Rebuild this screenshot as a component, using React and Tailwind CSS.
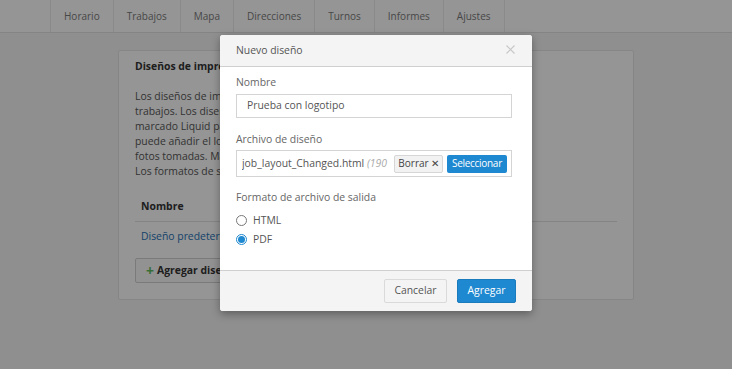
import React from 'react';

const NAV = ['Horario', 'Trabajos', 'Mapa', 'Direcciones', 'Turnos', 'Informes', 'Ajustes'];

function Radio({ label, checked }) {
  return (
    <div className="flex items-center h-[19px]">
      {checked ? (
        <span className="w-[11px] h-[11px] rounded-full border border-[#1e88d0] bg-white flex items-center justify-center">
          <span className="w-[7px] h-[7px] rounded-full bg-[#1e88d0]" />
        </span>
      ) : (
        <span className="w-[11px] h-[11px] rounded-full border border-[#777] bg-white" />
      )}
      <span className="ml-[6px] text-[10.4px] text-[#555]">{label}</span>
    </div>
  );
}

export default function App() {
  return (
    <div className="relative w-[732px] h-[369px] overflow-hidden bg-[#eeeeee] text-[#555]" style={{ fontFamily: '"Open Sans", "Noto Sans", sans-serif' }}>
      {/* top navigation */}
      <div className="h-[33px] bg-[#f9f9f9] border-b border-[#dcdcdc] flex pl-[50px]">
        {NAV.map((n) => (
          <div key={n} className="h-full flex items-center px-[13px] border-l border-[#e6e6e6] last:border-r text-[10px] text-[#777]">
            {n}
          </div>
        ))}
      </div>

      {/* page card */}
      <div className="ml-[118px] mt-[17px] w-[516px] h-[250px] bg-[#f8f8f8] border border-[#e0e0e0] rounded-[2px] px-[16px] pt-[8px]">
        <div className="text-[10.4px] font-bold text-[#333] leading-[15px]">Diseños de impresión</div>
        <div className="mt-[15px] text-[10.4px] leading-[15px] text-[#555] whitespace-nowrap">
          Los diseños de impresión le permiten personalizar los informes de<br />
          trabajos. Los diseños se crean como archivos HTML con el lenguaje de<br />
          marcado Liquid para insertar los datos del trabajo. Por ejemplo,<br />
          puede añadir el logotipo de su empresa, los campos personalizados, las firmas<br />
          fotos tomadas. Más información sobre cómo crear diseños.<br />
          Los formatos de salida disponibles son HTML y PDF.
        </div>
        <div className="mt-[13px] border-b border-[#ddd] h-[30px] flex items-center pl-[6px] text-[10.4px] font-bold text-[#333]">Nombre</div>
        <div className="h-[29px] flex items-center pl-[6px] text-[10.4px] text-[#1f6fb2]">Diseño predeterminado</div>
        <button className="mt-[7px] h-[25px] px-[10px] flex items-center gap-[3px] border border-[#ccc] bg-[#f4f4f4] rounded-[2px] text-[10.4px] font-bold text-[#333]">
          <span className="text-[#5cb85c] text-[14px] font-bold leading-none">+</span>
          Agregar diseño
        </button>
      </div>

      {/* overlay */}
      <div className="absolute inset-0 bg-black/40" />

      {/* modal */}
      <div className="absolute left-[220px] top-[35px] w-[312px] bg-white rounded-[3px] shadow-[0_3px_9px_rgba(0,0,0,0.35)] overflow-hidden">
        <div className="h-[32px] bg-[#f4f4f4] border-b border-[#cfcfcf] flex items-center justify-between pl-[16px] pr-[17px]">
          <span className="text-[10.4px] text-[#555]">Nuevo diseño</span>
          <svg width="9" height="9" viewBox="0 0 9 9" className="mb-[2px]">
            <path d="M0.5 0.5L8.5 8.5M8.5 0.5L0.5 8.5" stroke="#c8c8c8" strokeWidth="1.2" />
          </svg>
        </div>
        <div className="pl-[16px] pr-[20px] pt-[8px] pb-[21px]">
          <div className="text-[10.4px] leading-[15px] text-[#666]">Nombre</div>
          <div className="mt-[4px] h-[24px] border border-[#d4d4d4] flex items-center pl-[10px] text-[10.4px] text-[#555]">Prueba con logotipo</div>
          <div className="mt-[14px] text-[10.4px] leading-[15px] text-[#666]">Archivo de diseño</div>
          <div className="mt-[3px] h-[27px] border border-[#d4d4d4] flex items-center pl-[5px] pr-[4px]">
            <span className="flex-1 overflow-hidden whitespace-nowrap text-[10.4px] text-[#555]">
              job_layout_Changed.html <i className="text-[#aaa]">(190 KB)</i>
            </span>
            <span className="ml-[6px] h-[18px] w-[49px] flex items-center justify-center gap-[2px] border border-[#d6d6d6] bg-[#f2f2f2] rounded-[2px] text-[10px] text-[#444]">
              Borrar <span className="text-[10px]">✕</span>
            </span>
            <span className="ml-[4px] h-[18px] w-[60px] flex items-center justify-center bg-[#1e88d0] rounded-[2px] text-[10px] tracking-[-0.3px] text-white">Seleccionar</span>
          </div>
          <div className="mt-[13px] text-[10.4px] leading-[15px] text-[#666]">Formato de archivo de salida</div>
          <div className="mt-[6px] flex flex-col">
            <Radio label="HTML" />
            <Radio label="PDF" checked />
          </div>
        </div>
        <div className="h-[41px] bg-[#f4f4f4] border-t border-[#cfcfcf] flex items-center justify-end gap-[10px] pr-[16px]">
          <button className="h-[24px] w-[63px] border border-[#dadada] bg-[#f4f4f4] rounded-[2px] text-[10.4px] text-[#555]">Cancelar</button>
          <button className="h-[24px] w-[59px] bg-[#1e88d0] border border-[#1a7bbd] rounded-[2px] text-[10.4px] text-white">Agregar</button>
        </div>
      </div>
    </div>
  );
}
